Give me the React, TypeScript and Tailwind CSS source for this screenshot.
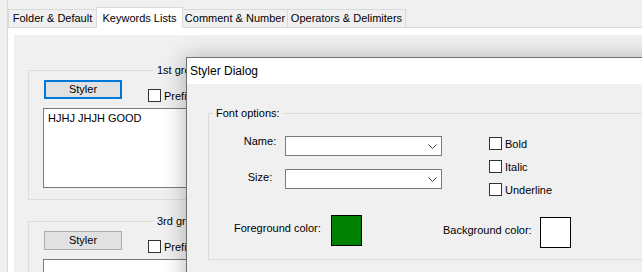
import React from 'react';

const FONT = "font-['Segoe_UI','Liberation_Sans',Arial,sans-serif]";

function Checkbox({ label, className = '' }: { label: string; className?: string }) {
  return (
    <div className={`flex items-center h-[13px] ${className}`}>
      <span className="w-[13px] h-[13px] border border-[#333333] bg-white shrink-0" />
      <span className="ml-[3px] leading-[14px] whitespace-nowrap">{label}</span>
    </div>
  );
}

function Combo() {
  return (
    <div className="w-[157px] h-[20px] border border-[#7a7a7a] bg-white flex items-center justify-end pr-[4px]">
      <svg width="9" height="5" viewBox="0 0 9 5">
        <path d="M0.5 0.5 L4.5 4.5 L8.5 0.5" stroke="#404040" fill="none" strokeWidth="1" />
      </svg>
    </div>
  );
}

function KeywordGroup({ title, focused, text }: { title: string; focused?: boolean; text?: string }) {
  return (
    <div className="relative w-[520px] border border-[#dcdcdc] px-[14px] pt-[9px] pb-[11px]">
      <span className="absolute left-[124px] top-[-8px] px-[4px] leading-[14px] bg-[#f0f0f0] whitespace-nowrap">
        {title}
      </span>
      <div className="h-[19px] flex items-start">
        <button
          className={`ml-px w-[78px] h-[19px] flex items-center justify-center bg-[#e1e1e1] leading-none ${
            focused ? 'border-2 border-[#0078d7]' : 'border border-[#adadad]'
          }`}
        >
          Styler
        </button>
        <Checkbox label="Prefix mode" className="ml-[26px] mt-[9px]" />
      </div>
      <div className="mt-[9px] h-[80px] border border-[#7a7a7a] bg-white pl-[4px] pt-[2px] leading-[14px]">
        {text}
      </div>
    </div>
  );
}

const tabBase = 'h-[18px] flex items-center justify-center border-t border-[#d9d9d9] bg-[#f0f0f0] whitespace-nowrap';

export default function App() {
  return (
    <div className={`relative w-[642px] h-[272px] overflow-hidden bg-[#f0f0f0] text-[11px] text-black ${FONT}`}>
      {/* tab control */}
      <div className="ml-[7px] h-full border-l border-[#dadada] flex flex-col">
        <div className="h-[27px] flex items-end shrink-0">
          <div className={`${tabBase} w-[88px] border-l`}>Folder &amp; Default</div>
          <div className="relative z-10 -mb-px w-[87px] h-[21px] flex items-start justify-center pt-[2px] border border-b-0 border-[#d9d9d9] bg-white whitespace-nowrap">
            Keywords Lists
          </div>
          <div className={`${tabBase} w-[105px] border-r`}>Comment &amp; Number</div>
          <div className={`${tabBase} w-[118px] border-r`}>Operators &amp; Delimiters</div>
        </div>
        <div className="flex-1 border-t border-[#d9d9d9] bg-white pl-[6px] pt-[7px]">
          <div className="h-full bg-[#f0f0f0] pl-[14px] pt-[35px]">
            <KeywordGroup title="1st group" focused text="HJHJ JHJH GOOD" />
            <div className="mt-[21px]">
              <KeywordGroup title="3rd group" />
            </div>
          </div>
        </div>
      </div>

      {/* Styler dialog */}
      <div className="absolute left-[186px] top-[57px] w-[520px] h-[260px] border border-[#707070] bg-[#f0f0f0] shadow-[0_2px_22px_rgba(0,0,0,0.3)]">
        <div className="h-[26px] bg-white flex items-center pl-[3px] text-[12px]">Styler Dialog</div>
        <div className="pl-[21px] pt-[29px]">
          <div className="relative w-[480px] h-[147px] border border-[#dcdcdc]">
            <span className="absolute left-[4px] top-[-8px] px-[3px] leading-[14px] bg-[#f0f0f0]">Font options:</span>
            <div className="h-[76px] flex items-start">
              <div className="pl-[29px] pt-[22px]">
                <div className="flex items-start">
                  <span className="w-[44px] -mt-[2px] text-center leading-[14px]">Name:</span>
                  <div className="ml-[3px]">
                    <Combo />
                  </div>
                </div>
                <div className="flex items-start mt-[13px]">
                  <span className="w-[44px] mt-[1px] text-center leading-[14px]">Size:</span>
                  <div className="ml-[3px]">
                    <Combo />
                  </div>
                </div>
              </div>
              <div className="ml-[47px] pt-[23px] flex flex-col gap-[10px]">
                <Checkbox label="Bold" />
                <Checkbox label="Italic" />
                <Checkbox label="Underline" />
              </div>
            </div>
            <div className="mt-[25px] pl-[25px] flex items-start">
              <span className="w-[97px] mt-[6px] leading-[14px] whitespace-nowrap">Foreground color:</span>
              <span className="w-[31px] h-[31px] border border-black bg-[#008000]" />
              <span className="ml-[81px] w-[97px] mt-[8px] leading-[14px] whitespace-nowrap">Background color:</span>
              <span className="mt-[2px] w-[31px] h-[31px] border border-black bg-white" />
            </div>
          </div>
        </div>
      </div>
    </div>
  );
}
